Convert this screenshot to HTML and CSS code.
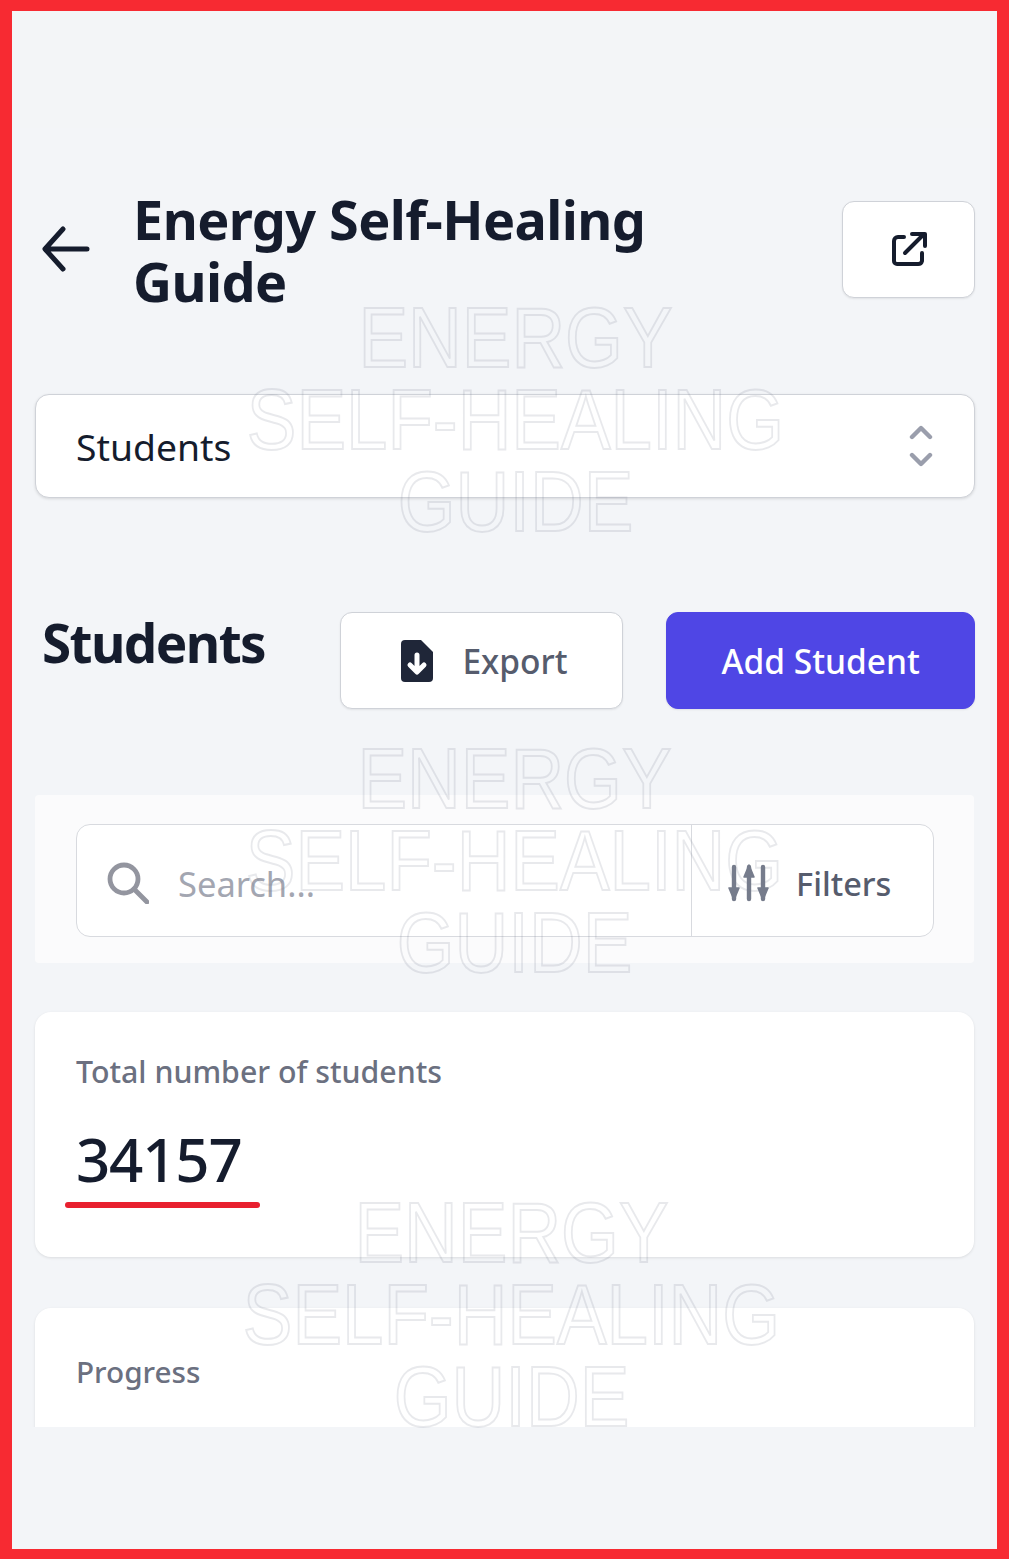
FILE: index.html
```html
<!DOCTYPE html>
<html lang="en">
<head>
<meta charset="utf-8">
<title>Energy Self-Healing Guide</title>
<link rel="stylesheet" href="styles.css">
</head>
<body>
<div class="frame">
  <div class="viewport">
    <div class="topband"></div>
    <main class="content">
      <header class="header">
        <button class="back" aria-label="Back">
          <svg viewBox="0 0 48 48" width="48" height="48" fill="none" stroke="#151c2d" stroke-width="5" stroke-linecap="round" stroke-linejoin="round"><path d="M45 24H4M21 4 3 24l18 20"/></svg>
        </button>
        <h1 class="title">Energy Self-Healing Guide</h1>
        <button class="btn icon-btn" aria-label="Open">
          <svg viewBox="0 0 36 36" width="36" height="36" fill="none" stroke="#151c2d" stroke-width="4" stroke-linecap="round" stroke-linejoin="round"><path d="M13 6H7a4 4 0 0 0-4 4v20a3 3 0 0 0 3 3h21a4 4 0 0 0 4-3v-8"/><path d="M14 22 33 3M21 3h13v12"/></svg>
        </button>
      </header>

      <div class="select">
        <span>Students</span>
        <svg viewBox="0 0 24 42" width="24" height="42" fill="none" stroke="#9a9eac" stroke-width="4.4" stroke-linecap="round" stroke-linejoin="round"><path d="M3 12 12 3l9 9M3 30l9 9 9-9"/></svg>
      </div>

      <section class="section-head">
        <h2 class="section-title">Students</h2>
        <button class="btn export">
          <svg viewBox="0 0 32 42" width="32" height="42"><path fill="#1f2638" d="M4 0h16l12 12v26a4 4 0 0 1-4 4H4a4 4 0 0 1-4-4V4a4 4 0 0 1 4-4z"/><path fill="none" stroke="#fff" stroke-width="5" stroke-linecap="round" stroke-linejoin="round" d="M16 15v15M9 25l7 7 7-7"/></svg>
          <span>Export</span>
        </button>
        <button class="btn primary">Add Student</button>
      </section>

      <section class="filter-card">
        <div class="search">
          <div class="search-field">
            <svg viewBox="0 0 42 42" width="42" height="42" fill="none" stroke="#93959f" stroke-width="4.8" stroke-linecap="round"><circle cx="17" cy="17" r="14"/><path d="m27 27 13 13"/></svg>
            <span class="placeholder">Search...</span>
          </div>
          <div class="filters">
            <svg viewBox="0 0 42 38" width="42" height="38" fill="#767c8c" stroke="#767c8c" stroke-width="4.4" stroke-linecap="round" stroke-linejoin="round"><path d="M6 3v32M21 3v32M35 3v32" fill="none"/><path stroke-width="1.5" d="M1 24h10l-5 12zM16 13h10L21 1zM30 24h10l-5 12z"/></svg>
            <span>Filters</span>
          </div>
        </div>
      </section>

      <section class="card total">
        <div class="label">Total number of students</div>
        <div class="value">34157<i class="underline"></i></div>
      </section>

      <section class="card progress">
        <div class="label">Progress</div>
      </section>
    </main>
    <div class="watermark wm-1">ENERGY<br>SELF-HEALING<br>GUIDE</div>
    <div class="watermark wm-2">ENERGY<br>SELF-HEALING<br>GUIDE</div>
    <div class="watermark wm-3">ENERGY<br>SELF-HEALING<br>GUIDE</div>
  </div>
</div>
</body>
</html>
```

FILE: styles.css
```css
* { box-sizing: border-box; }
html, body { margin: 0; height: 100%; }
body { font-family: "Noto Sans", "Open Sans", sans-serif; color: #151c2d; }

.frame {
  width: 1009px;
  height: 1559px;
  border: solid #f72a32;
  border-width: 11px 12px 10px 12px;
  background: #f3f5f8;
}
.viewport {
  position: relative;
  height: 100%;
  overflow: hidden;
}
.topband { height: 117px; background: #f3f5f7; }
.content {
  height: 1299px;
  overflow: hidden;
  padding: 0 22px 0 23px;
}

.header {
  display: flex;
  align-items: center;
  height: 124px;
  margin-top: 60px;
  padding-left: 7px;
}
.back {
  flex: none;
  width: 91px;
  margin-top: -2px;
  padding: 0;
  border: 0;
  background: none;
  display: flex;
  text-align: left;
}
.title {
  flex: 1;
  margin: -1px auto 0 0;
  max-width: 560px;
  font-size: 54px;
  line-height: 62px;
  font-weight: 700;
  letter-spacing: -0.6px;
}
.btn {
  display: flex;
  align-items: center;
  justify-content: center;
  background: #fff;
  border: 1.5px solid #cfd2d8;
  border-radius: 12px;
  box-shadow: 0 1px 2px rgba(0,0,0,.08);
  font: 500 33.5px "Noto Sans", sans-serif;
  padding: 0;
}
.icon-btn { flex: none; width: 133px; height: 97px; margin-top: -2px; }

.select {
  display: flex;
  align-items: center;
  justify-content: space-between;
  height: 104px;
  margin-top: 82px;
  padding: 0 41px 0 40px;
  background: #fff;
  border: 1.5px solid #cfd2d8;
  border-radius: 14px;
  box-shadow: 0 1px 3px rgba(0,0,0,.12);
  font-size: 37.3px;
}

.section-head {
  display: flex;
  align-items: flex-start;
  margin-top: 114px;
  padding-left: 7px;
}
.section-title {
  margin: 0;
  width: 298px;
  font-size: 53px;
  line-height: 62px;
  font-weight: 700;
  letter-spacing: -1.6px;
}
.export {
  width: 284px;
  height: 97px;
  gap: 29px;
  padding-left: 6px;
  color: #565c6d;
}
.primary {
  width: 309px;
  height: 97px;
  margin-left: 43px;
  background: #4f46e5;
  border-color: #4f46e5;
  color: #fff;
}

.filter-card {
  height: 168px;
  margin: 86px 1px 0 0;
  padding: 29px 40px 0 41px;
  background: #fbfbfc;
  border-radius: 4px;
}
.search {
  display: flex;
  height: 113px;
  background: #fff;
  border: 1.5px solid #d8dadf;
  border-radius: 14px;
}
.search-field {
  width: 615px;
  display: flex;
  align-items: center;
  gap: 29px;
  padding: 5px 0 0 30px;
  border-right: 1.5px solid #d8dadf;
  font-size: 34.5px;
}
.placeholder { color: #a3a6b1; }
.filters {
  display: flex;
  align-items: center;
  gap: 26px;
  padding: 5px 0 0 36px;
  font-size: 32.5px;
  font-weight: 500;
  color: #565c6d;
}

.card {
  background: #fff;
  border-radius: 16px;
  margin-right: 1px;
  padding: 40px 41px 0;
  box-shadow: 0 1px 3px rgba(0,0,0,.1);
}
.total { height: 245px; margin-top: 49px; }
.progress { height: 200px; margin-top: 51px; padding-top: 44px; }
.label {
  font-size: 30.3px;
  line-height: 40px;
  font-weight: 500;
  color: #6b7080;
}
.progress .label { font-size: 29.7px; }
.value {
  position: relative;
  width: fit-content;
  margin-top: 27px;
  font-size: 60px;
  line-height: 80px;
  font-weight: 500;
  letter-spacing: -1.2px;
}
.underline {
  position: absolute;
  left: -11px;
  top: 83px;
  width: 195px;
  height: 6px;
  border-radius: 3px;
  background: #e8202f;
}

.watermark {
  position: absolute;
  width: 100%;
  text-align: center;
  font-family: "Liberation Sans", Arial, sans-serif;
  font-size: 85px;
  line-height: 82px;
  font-weight: 400;
  color: transparent;
  -webkit-text-stroke: 2px rgba(120,125,140,.17);
  transform: scaleX(.875);
  pointer-events: none;
}
.wm-1 { top: 286px; left: 11px; }
.wm-2 { top: 727px; left: 10px; }
.wm-3 { top: 1181px; left: 7px; }
```
